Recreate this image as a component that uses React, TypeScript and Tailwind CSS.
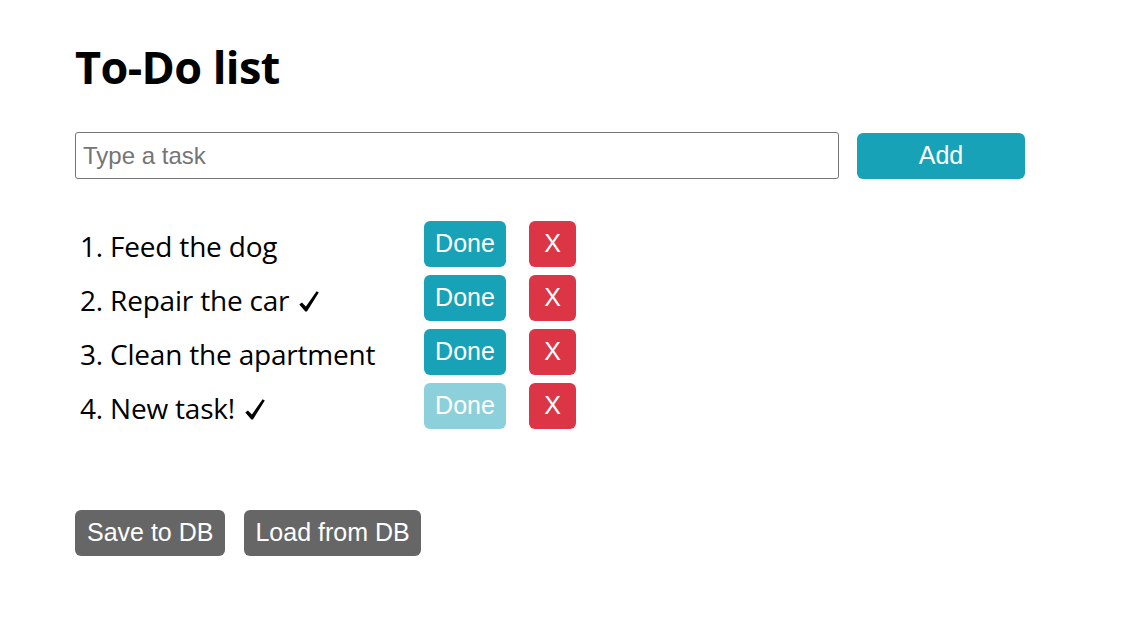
import React, { useState } from 'react';

type Task = { id: number; text: string; done: boolean };

const initialTasks: Task[] = [
  { id: 1, text: 'Feed the dog', done: false },
  { id: 2, text: 'Repair the car', done: true },
  { id: 3, text: 'Clean the apartment', done: false },
  { id: 4, text: 'New task!', done: true },
];

const Check = () => (
  <svg viewBox="0 0 20 21" className="ml-[10px] inline-block h-[21px] w-[20px] align-[-1px]" aria-label="done">
    <path d="M0.3 13.6 L2.9 11.4 L6.9 15.6 L17.6 0.2 L19.8 1.6 L7.9 20.6 L6.3 20.6 Z" fill="#000" />
  </svg>
);

export default function App() {
  const [tasks, setTasks] = useState<Task[]>(initialTasks);
  const [draft, setDraft] = useState('');

  const addTask = () => {
    if (!draft.trim()) return;
    setTasks((prev) => [...prev, { id: Date.now(), text: draft.trim(), done: false }]);
    setDraft('');
  };

  const toggle = (id: number) =>
    setTasks((prev) => prev.map((t) => (t.id === id ? { ...t, done: !t.done } : t)));

  const remove = (id: number) => setTasks((prev) => prev.filter((t) => t.id !== id));

  return (
    <div className="min-h-[632px] w-full bg-white pl-[75px] pt-[35px] text-black">
      <h1 className="font-['Open_Sans',sans-serif] text-[45px] font-bold leading-[64px] tracking-[-0.6px]">
        To-Do list
      </h1>

      {/* Input row */}
      <div className="mt-[33px] flex items-center gap-[18px]">
        <input
          value={draft}
          onChange={(e) => setDraft(e.target.value)}
          placeholder="Type a task"
          className="h-[47px] w-[764px] rounded-[3px] border border-[#767676] px-[7px] font-['Liberation_Sans',Arial,sans-serif] text-[24px] text-black placeholder:text-[#757575] outline-none"
        />
        <button
          onClick={addTask}
          className="h-[46px] w-[168px] rounded-[6px] bg-[#17a2b8] font-['Liberation_Sans',Arial,sans-serif] text-[25px] text-white"
        >
          Add
        </button>
      </div>

      {/* Task list */}
      <ol className="mt-[42px] flex flex-col gap-[8px]">
        {tasks.map((t, i) => (
          <li key={t.id} className="flex h-[46px] items-center">
            <span className="w-[349px] pl-[5px] pt-[3px] font-['Open_Sans',sans-serif] text-[28px] leading-none tracking-[-0.2px]">
              {i + 1}. {t.text}
              {t.done && <Check />}
            </span>
            <button
              onClick={() => toggle(t.id)}
              className={`h-[46px] w-[82px] rounded-[6px] font-['Liberation_Sans',Arial,sans-serif] text-[25px] text-white ${
                i === 3 ? 'bg-[#8bd0db]' : 'bg-[#17a2b8]'
              }`}
            >
              Done
            </button>
            <button
              onClick={() => remove(t.id)}
              className="ml-[23px] h-[46px] w-[47px] rounded-[6px] bg-[#dc3545] font-['Liberation_Sans',Arial,sans-serif] text-[25px] text-white"
            >
              X
            </button>
          </li>
        ))}
      </ol>

      {/* DB actions */}
      <div className="mt-[81px] flex gap-[19px]">
        <button className="h-[46px] rounded-[6px] bg-[#666666] px-[12px] font-['Liberation_Sans',Arial,sans-serif] text-[25px] text-white">
          Save to DB
        </button>
        <button className="h-[46px] rounded-[6px] bg-[#666666] px-[11px] font-['Liberation_Sans',Arial,sans-serif] text-[25px] text-white">
          Load from DB
        </button>
      </div>
    </div>
  );
}
